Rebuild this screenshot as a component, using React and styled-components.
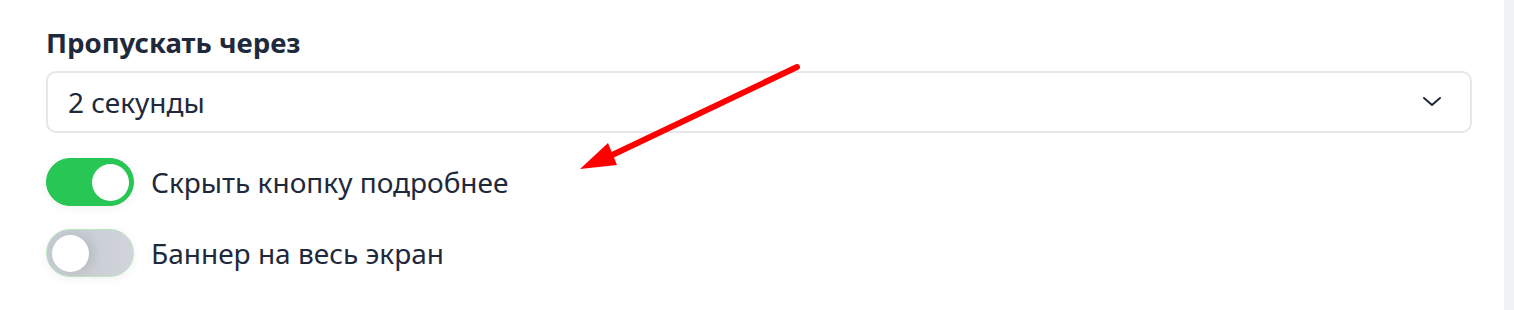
import React from "react";
import styled, { createGlobalStyle } from "styled-components";

const Global = createGlobalStyle`
  html, body {
    margin: 0;
    padding: 0;
    background: #ffffff;
    font-family: "Noto Sans", "Open Sans", sans-serif;
    color: #1f2937;
  }
`;

const Page = styled.div`
  display: flex;
  width: 1514px;
  height: 310px;
  overflow: hidden;
`;

const Panel = styled.div`
  flex: 1;
  position: relative;
  padding: 24px 32px 0 46px;
`;

const Sidebar = styled.div`
  width: 10px;
  background: #f1f2f4;
`;

const Label = styled.div`
  font-size: 27.6px;
  font-weight: 700;
  line-height: 36px;
  color: #1e293b;
  margin-bottom: 11px;
`;

const Select = styled.div`
  display: flex;
  align-items: center;
  justify-content: space-between;
  height: 62px;
  box-sizing: border-box;
  border: 2px solid #e5e7eb;
  border-radius: 10px;
  padding: 0 26px 0 20px;
  font-size: 28px;
  color: #1e293b;
`;

const Options = styled.div`
  display: flex;
  flex-direction: column;
  gap: 23px;
  margin-top: 25px;
`;

const Row = styled.div`
  display: flex;
  align-items: center;
  gap: 17px;
  font-size: 28px;
  color: #1e293b;
`;

const Track = styled.div`
  position: relative;
  flex: none;
  width: 88px;
  height: 48px;
  box-sizing: border-box;
  border-radius: 24px;
  background: ${(p) => (p.on ? "#27c655" : "linear-gradient(90deg, #c4c8cf, #d1d5db)")};
  border: 1px solid ${(p) => (p.on ? "#27c655" : "#b9e5bf")};
  box-shadow: 0 2px 10px rgba(0, 0, 0, 0.06);
`;

const Knob = styled.div`
  position: absolute;
  top: 50%;
  left: ${(p) => (p.on ? "45px" : "5px")};
  width: 37px;
  height: 37px;
  margin-top: -18.5px;
  border-radius: 50%;
  background: #ffffff;
  box-shadow: ${(p) => (p.on ? "none" : "6px 0 10px rgba(0,0,0,0.08)")};
`;

const Arrow = styled.svg`
  position: absolute;
  left: 570px;
  top: 58px;
`;

const Toggle = ({ on, children }) => (
  <Row>
    <Track on={on}>
      <Knob on={on} />
    </Track>
    <span>{children}</span>
  </Row>
);

export default function App() {
  return (
    <Page>
      <Global />
      <Panel>
        <Label>Пропускать через</Label>
        <Select>
          <span>2 секунды</span>
          <svg width="24" height="24" viewBox="0 0 24 24" fill="none" stroke="#1e293b" strokeWidth="2" strokeLinecap="round" strokeLinejoin="round">
            <path d="M4 8l8 7 8-7" />
          </svg>
        </Select>
        <Options>
          <Toggle on>Скрыть кнопку подробнее</Toggle>
          <Toggle>Баннер на весь экран</Toggle>
        </Options>
        <Arrow width="240" height="120" viewBox="0 0 240 120">
          <line x1="227" y1="9" x2="38" y2="99" stroke="#ff0000" strokeWidth="6" strokeLinecap="round" />
          <polygon points="10,111 38,85 47,107" fill="#ff0000" />
        </Arrow>
      </Panel>
      <Sidebar />
    </Page>
  );
}
